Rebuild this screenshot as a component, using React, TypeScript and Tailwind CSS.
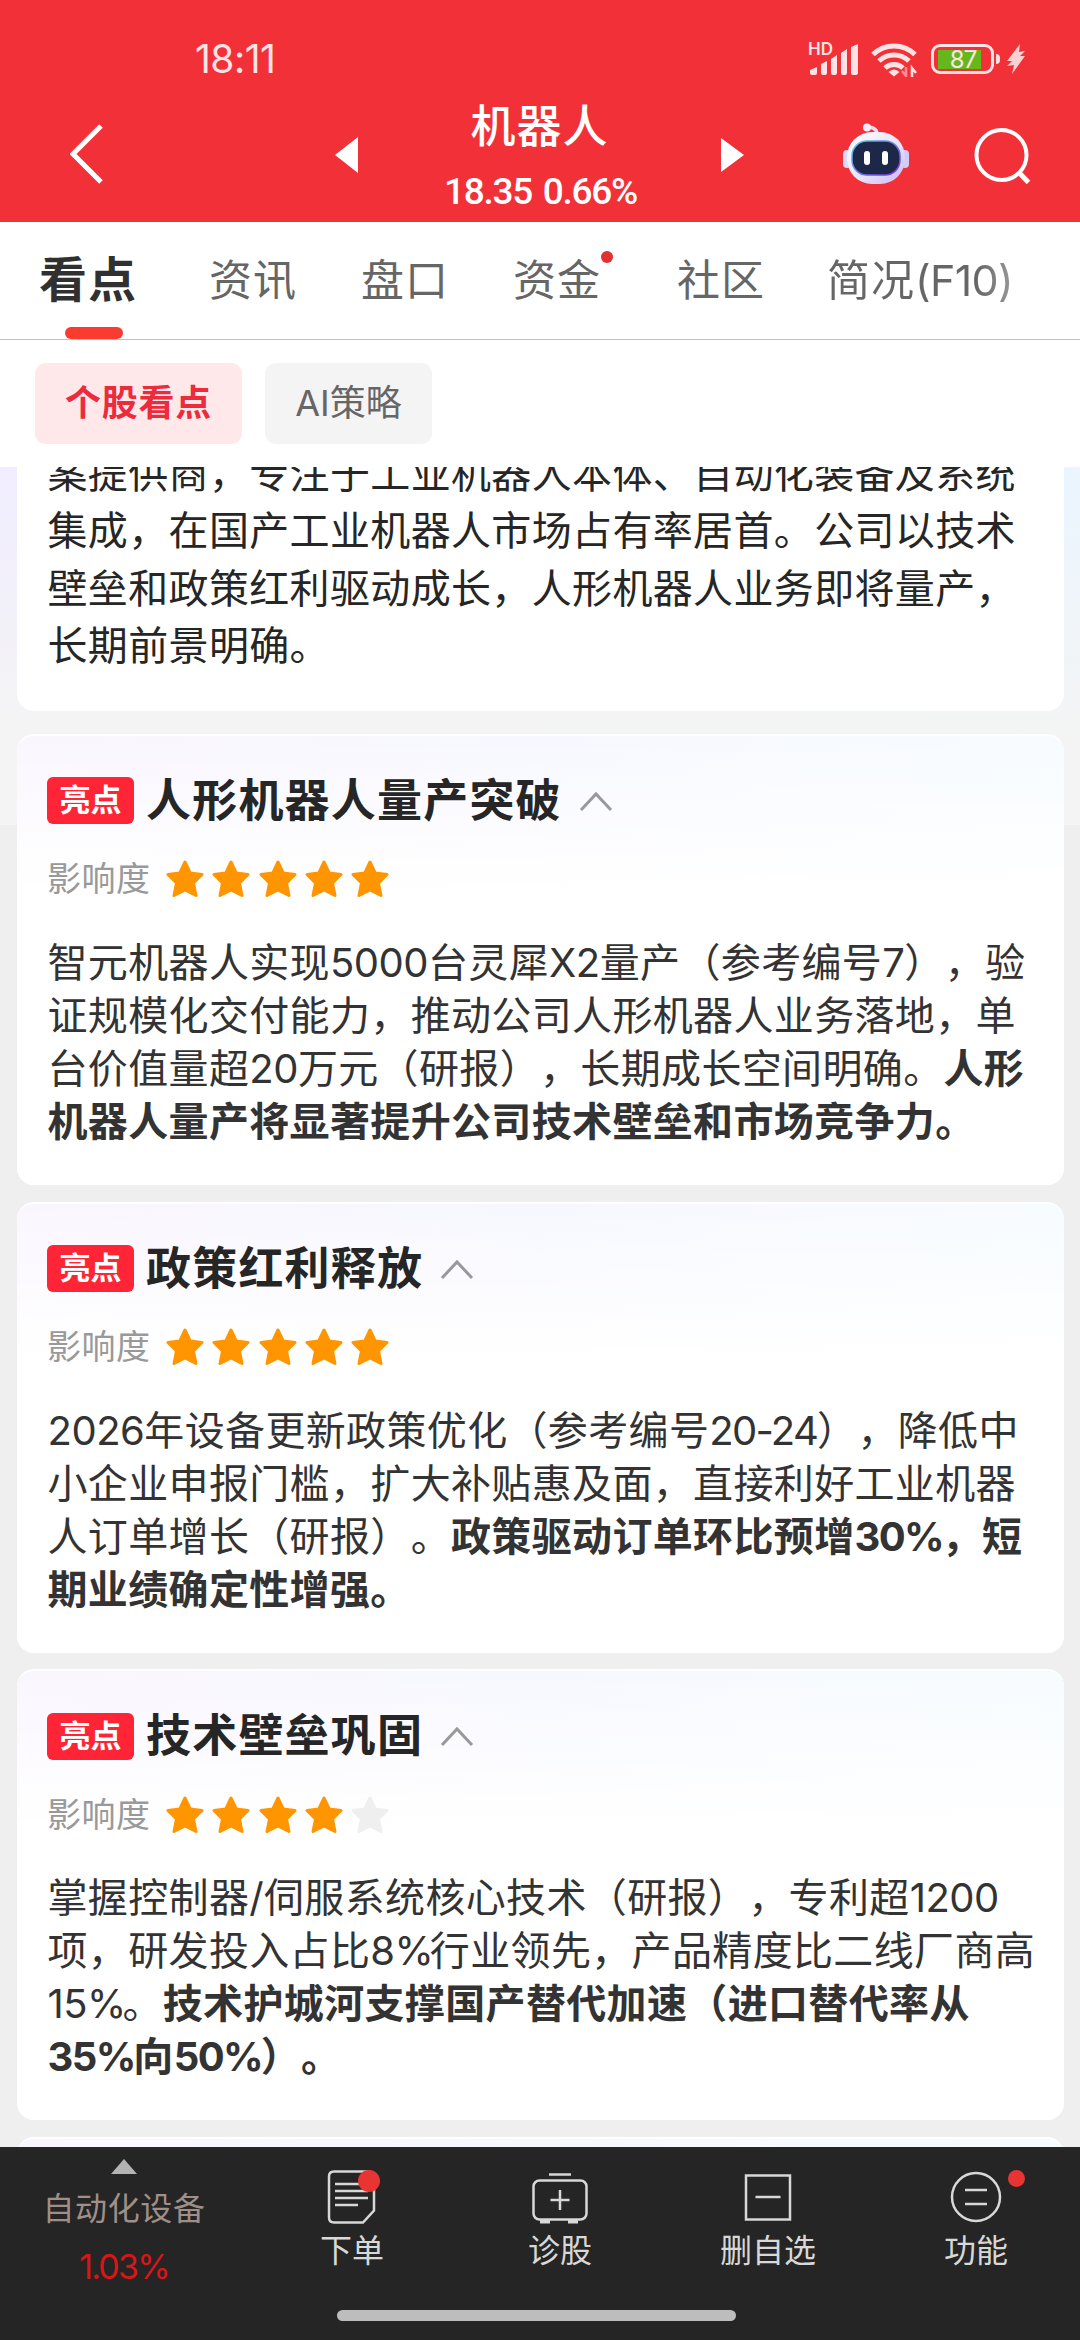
import { ReactNode } from "react"

const TABS = [
  { name: "看点", width: "w-[170px]", active: true },
  { name: "资讯", width: "w-[152px]" },
  { name: "盘口", width: "w-[152px]" },
  { name: "资金", width: "w-[164px]", dot: true },
  { name: "社区", width: "w-[150px]" },
]

type Line = { text?: string; bold?: string }

const CARDS: { title: string; stars: number; lines: Line[] }[] = [
  {
    title: "人形机器人量产突破",
    stars: 5,
    lines: [
      { text: "智元机器人实现5000台灵犀X2量产（参考编号7），验" },
      { text: "证规模化交付能力，推动公司人形机器人业务落地，单" },
      { text: "台价值量超20万元（研报），长期成长空间明确。", bold: "人形" },
      { bold: "机器人量产将显著提升公司技术壁垒和市场竞争力。" },
    ],
  },
  {
    title: "政策红利释放",
    stars: 5,
    lines: [
      { text: "2026年设备更新政策优化（参考编号20-24），降低中" },
      { text: "小企业申报门槛，扩大补贴惠及面，直接利好工业机器" },
      { text: "人订单增长（研报）。", bold: "政策驱动订单环比预增30%，短" },
      { bold: "期业绩确定性增强。" },
    ],
  },
  {
    title: "技术壁垒巩固",
    stars: 4,
    lines: [
      { text: "掌握控制器/伺服系统核心技术（研报），专利超1200" },
      { text: "项，研发投入占比8%行业领先，产品精度比二线厂商高" },
      { text: "15%。", bold: "技术护城河支撑国产替代加速（进口替代率从" },
      { bold: "35%向50%）。" },
    ],
  },
]

function StatusBar() {
  return (
    <div className="flex h-[92px] items-start pl-[195px] pt-[39px] text-[#ffe3e4]">
      <span className="w-[613px] text-[39px] leading-[40px] tracking-[-0.5px]">18:11</span>
      <div className="relative h-[38px] w-[51px]">
        <span className="absolute left-0 top-0 text-[17px] font-semibold leading-[20px]">HD</span>
        <svg className="absolute left-0 top-0" width="51" height="38" fill="currentColor">
          <path d="M2 31l7-3v6q0 2-2 2H4q-2 0-2-2zM13 25l6-3v12q0 2-2 2h-2q-2 0-2-2zM23 20l6-4v18q0 2-2 2h-2q-2 0-2-2zM33 14l6-4v24q0 2-2 2h-2q-2 0-2-2zM43 8l7-3v29q0 2-2 2h-3q-2 0-2-2z" />
        </svg>
      </div>
      <svg className="ml-3" width="48" height="38" fill="none" stroke="currentColor" strokeWidth="5">
        <path d="M2 15.5a30 30 0 0 1 42 0M8 22a21.5 21.5 0 0 1 30 0M14 29a13 13 0 0 1 18 0" />
        <path d="M17.500 33q5.500-5 11 0l-5.500 4.500z" fill="currentColor" stroke="none" />
        <path d="M35 28v9l-4-5" stroke="#ff8d92" strokeWidth="2.500" />
        <path d="M41 38v-9l4 5" strokeWidth="2.500" />
      </svg>
      <div className="relative ml-[12px] mt-[5px] flex h-[30px] w-[63px] items-center rounded-[9px] border-3 border-[#ffe3e4] px-1">
        <div className="h-[19px] w-[43px] bg-[#65b81b]" />
        <span className="absolute inset-0 pl-px text-center text-[24px] leading-[25px] tracking-[-1px]">87</span>
      </div>
      <div className="ml-[2px] mt-[15px] h-[10px] w-[4px] rounded-r-sm bg-[#ffe3e4]" />
      <svg className="ml-[7px] mt-[5px]" width="18" height="30" fill="#ffd0d2">
        <path d="M13 0L0 17h5l-5 5 7-1-2 9L18 12h-5l5-5-6 1z" />
      </svg>
    </div>
  )
}

function Robot() {
  return (
    <svg width="66" height="62" viewBox="0 0 66 62">
      <defs>
        <linearGradient id="shell" x1="0" y1="0" x2="1" y2="1">
          <stop offset="0" stopColor="#ffffff" />
          <stop offset="0.550" stopColor="#e6e4fb" />
          <stop offset="1" stopColor="#c9b8f2" />
        </linearGradient>
        <linearGradient id="rim" x1="0" y1="0" x2="1" y2="1">
          <stop offset="0" stopColor="#5fc8e8" />
          <stop offset="1" stopColor="#7a2be0" />
        </linearGradient>
      </defs>
      <path d="M23 4q11 0 11 7" fill="none" stroke="#e9dcf5" strokeWidth="3.500" />
      <circle cx="24" cy="4.500" r="4" fill="#f5edfb" />
      <rect x="0" y="27" width="8" height="18" rx="4" fill="#dcd9f8" />
      <rect x="58" y="27" width="8" height="18" rx="4" fill="#cfcdf6" />
      <rect x="4" y="9" width="58" height="52" rx="25" fill="url(#shell)" />
      <rect x="9" y="18" width="48" height="34" rx="15" fill="#1d2747" stroke="url(#rim)" strokeWidth="1.500" />
      <rect x="21" y="28" width="6" height="14" rx="3" fill="#fff" />
      <rect x="39" y="28" width="6" height="14" rx="3" fill="#fff" />
    </svg>
  )
}

function Header() {
  return (
    <header className="h-[222px] bg-[#f23037] text-white">
      <StatusBar />
      <div className="flex h-[130px] items-start">
        <svg className="ml-[70px] mt-[31px]" width="34" height="62" fill="none" stroke="currentColor" strokeWidth="5">
          <path d="M31 3L3 31l28 28" />
        </svg>
        <svg className="ml-[231px] mt-[45px]" width="23" height="36" fill="currentColor">
          <path d="M23 0v36L0 18z" />
        </svg>
        <div className="w-[363px] text-center">
          <h1 className="mt-[10px] text-[45px] font-medium leading-[50px] tracking-[1px]">机器人</h1>
          <p className="mt-[18px] pl-[2px] font-[Roboto] text-[37px] font-medium leading-[44px] tracking-[-1.300px] [word-spacing:3px]">18.35 0.66%</p>
        </div>
        <svg className="mt-[45px]" width="23" height="36" fill="currentColor">
          <path d="M0 1v34l23-17z" />
        </svg>
        <div className="ml-[99px] mt-[31px]">
          <Robot />
        </div>
        <svg className="ml-[65px] mt-[34px]" width="60" height="60" fill="none" stroke="currentColor" strokeWidth="4">
          <circle cx="27.500" cy="29" r="25" />
          <path d="M44.500 46l10 10.500" strokeWidth="5" />
        </svg>
      </div>
    </header>
  )
}

function Tabs() {
  return (
    <nav className="flex h-[118px] border-b border-[#c2c2c2] bg-white pl-[39px] text-[43px] leading-[116px] tracking-[1px] text-[#666]">
      {TABS.map((t) => (
        <div key={t.name} className={"relative shrink-0 " + t.width}>
          {t.active ? (
            <>
              <span className="text-[48px] font-bold text-[#303030]">{t.name}</span>
              <div className="absolute bottom-0 left-[26px] h-[12px] w-[58px] rounded-full bg-[#fb3a30]" />
            </>
          ) : (
            t.name
          )}
          {t.dot && <div className="absolute left-[88px] top-[29px] h-[12px] w-[12px] rounded-full bg-[#e03030]" />}
        </div>
      ))}
      <div className="whitespace-nowrap bg-linear-to-r from-[#666] from-80% to-[#999] bg-clip-text text-transparent">
        简况<span className="tracking-[-0.700px]">(F10)</span>
      </div>
    </nav>
  )
}

// latin runs sit tighter than the chinese characters around them
function Mixed({ text, digits, percent }: { text: string; digits: string; percent: string }) {
  return text.split(/([0-9A-Z-]+|%)/).map((part, i) => {
    if (part === "%") return <span key={i} className={percent}>%</span>
    if (part.includes("-")) return <span key={i} className="tracking-[-1.700px]">{part}</span>
    if (i % 2) return <span key={i} className={digits}>{part}</span>
    return part
  })
}

function Star({ on }: { on: boolean }) {
  return (
    <svg width="38" height="37" viewBox="0 0 38 37" fill={on ? "#ff9500" : "#efefef"} stroke={on ? "#ff9500" : "#efefef"} strokeWidth="3" strokeLinejoin="round">
      <path d="M19 2l5.200 11L36 14.500l-8.500 8.500 2.500 12.500-11-5.500-11 5.500L10.500 23 2 14.500 13.800 13z" />
    </svg>
  )
}

function Card({ title, stars, lines }: { title: string; stars: number; lines: Line[] }) {
  return (
    <section className="relative h-[451px] shrink-0 overflow-hidden rounded-[17px] border-t-2 border-white bg-white bg-linear-to-r from-[#faf6fe] via-[#f7f8ff] to-[#f7fcff]">
      <div className="absolute inset-0 bg-linear-to-b from-transparent to-white to-35%" />
      <div className="relative pl-[30px] pt-[39px]">
        <div className="flex h-[52px] items-center">
          <span className="h-[47px] w-[87px] rounded-[6px] bg-[#ff2436] text-center text-[31px] font-bold leading-[46px] text-white">亮点</span>
          <h2 className="ml-[12px] text-[45px] font-bold leading-[52px] tracking-[1.200px] text-[#262626]">{title}</h2>
          <svg className="ml-[17px]" width="34" height="22" fill="none" stroke="#999" strokeWidth="3">
            <path d="M2 20L17 4l15 16" />
          </svg>
        </div>
        <div className="mt-[31px] flex h-[42px] items-center gap-[8.300px]">
          <span className="w-[110.700px] text-[34px] tracking-[0.500px] text-[#999]">影响度</span>
          {[1, 2, 3, 4, 5].map((n) => (
            <Star key={n} on={n <= stars} />
          ))}
        </div>
        <div className="mt-[36px] whitespace-nowrap pl-[0.500px] text-[40px] leading-[53px] tracking-[0.350px] text-[#333]">
          {lines.map((l, i) => (
            <p key={i}>
              {l.text && <Mixed text={l.text} digits="tracking-[-0.500px]" percent="tracking-[-4px]" />}
              {l.bold && (
                <b>
                  <Mixed text={l.bold} digits="tracking-[-1.600px]" percent="tracking-[-3px]" />
                </b>
              )}
            </p>
          ))}
        </div>
      </div>
    </section>
  )
}

function NavItem({ label, children }: { label: string; children: ReactNode }) {
  return (
    <div className="w-[208px] text-center">
      <svg className="mx-auto mt-[20px]" width="104" height="62" viewBox="0 0 104 62" fill="none" stroke="#d8d8d8" strokeWidth="2.500">
        {children}
      </svg>
      <p className="text-[32px] leading-[44px] text-[#d8d8d8]">{label}</p>
    </div>
  )
}

function BottomNav() {
  return (
    <footer className="flex h-[193px] flex-col bg-[#252525]">
      <div className="flex h-[163px]">
        <div className="w-[248px] text-center">
          <svg className="mx-auto mt-[12px]" width="26" height="15" fill="#b3b3b3">
            <path d="M13 0l13 15H0z" />
          </svg>
          <p className="mt-[13px] text-[32px] leading-[44px] tracking-[0.600px] text-[#a08f88]">自动化设备</p>
          <p className="mt-[14px] text-[34px] leading-[44px] tracking-[-1.800px] text-[#d91518]">1.03%</p>
        </div>
        <NavItem label="下单">
          <path d="M34 4.500h34q6 0 6 6v33L63 55.500H34q-5 0-5-5v-41q0-5 5-5z" />
          <path d="M35 17h25M35 24h33M35 31h33M35 38h23" />
          <circle cx="69" cy="14" r="11" fill="#e93434" stroke="none" />
        </NavItem>
        <NavItem label="诊股">
          <rect x="25.500" y="13.500" width="53" height="39" rx="6" />
          <path d="M41 7.500h22M52 23v20M42.500 33h19" />
          <path d="M32 54.500h10M60 54.500h10" strokeWidth="4" />
        </NavItem>
        <NavItem label="删自选">
          <rect x="30" y="8.500" width="44" height="44" />
          <path d="M39.500 30h25" />
        </NavItem>
        <NavItem label="功能">
          <circle cx="52" cy="30" r="24" />
          <path d="M41 23h22M41 37h22" />
          <circle cx="92.500" cy="11.500" r="8.500" fill="#e93434" stroke="none" />
        </NavItem>
      </div>
      <div className="ml-[337px] h-[11px] w-[399px] rounded-full bg-[#bdbdbd]" />
    </footer>
  )
}

export default function App() {
  return (
    <div className="flex h-[2340px] w-[1080px] flex-col overflow-hidden bg-[#efefef] font-[Inter,'Noto_Sans_CJK_SC',sans-serif] [text-spacing-trim:space-all]">
      <Header />
      <Tabs />
      <div className="flex h-[127px] gap-[23px] bg-white pl-[35px] pt-[23px] text-center text-[36px] leading-[81px]">
        <div className="h-[81px] w-[207px] rounded-[11px] bg-[#ffe8ea] font-bold tracking-[0.800px] text-[#ec2b3d]">个股看点</div>
        <div className="h-[81px] w-[167px] rounded-[11px] bg-[#f4f4f4] text-[#666]">AI策略</div>
      </div>
      <main className="relative h-[1680px] overflow-hidden">
        <div className="absolute inset-x-0 top-0 h-[358px] bg-linear-to-r from-[#f1edff] to-[#eaf5ff]">
          <div className="h-full bg-linear-to-b from-transparent to-[#f4f4f4] to-75%" />
        </div>
        <div className="relative flex flex-col gap-[16.670px] pl-[17px] pr-[16px]">
          <section className="mb-[6.330px] h-[244px] shrink-0 rounded-b-[17px] bg-white pl-[30.500px]">
            <div className="-mt-[22px] whitespace-nowrap text-[40px] leading-[57.300px] tracking-[0.350px] text-[#262626]">
              <p>案提供商，专注于工业机器人本体、自动化装备及系统</p>
              <p>集成，在国产工业机器人市场占有率居首。公司以技术</p>
              <p>壁垒和政策红利驱动成长，人形机器人业务即将量产，</p>
              <p>长期前景明确。</p>
            </div>
          </section>
          {CARDS.map((c) => (
            <Card key={c.title} {...c} />
          ))}
          <section className="h-[60px] shrink-0 rounded-t-[17px] border-t-2 border-white bg-linear-to-r from-[#faf6fe] via-[#f7f8ff] to-[#f7fcff]" />
        </div>
      </main>
      <BottomNav />
    </div>
  )
}
